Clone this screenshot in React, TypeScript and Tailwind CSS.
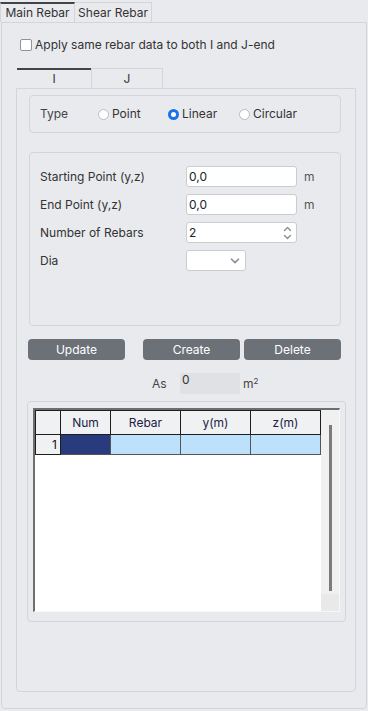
import React, { useState } from 'react';

type ShapeType = 'point' | 'linear' | 'circular';

const Radio: React.FC<{ checked: boolean; label: string; onClick: () => void }> = ({ checked, label, onClick }) => (
  <button type="button" onClick={onClick} className="flex items-center gap-[3px] text-[12px] text-[#333]">
    {checked ? (
      <span className="w-[11px] h-[11px] rounded-full bg-[#1a73e8] flex items-center justify-center">
        <span className="w-[5px] h-[5px] rounded-full bg-white" />
      </span>
    ) : (
      <span className="w-[11px] h-[11px] rounded-full bg-white border border-[#b9bcc2]" />
    )}
    <span>{label}</span>
  </button>
);

const TextField: React.FC<{ value: string; className?: string; children?: React.ReactNode }> = ({ value, className = '', children }) => (
  <div className={`h-[21px] bg-white border border-[#c9ccd1] rounded-[3px] flex items-center pl-[2px] pr-[4px] text-[12px] text-[#222] ${className}`}>
    <span className="flex-1">{value}</span>
    {children}
  </div>
);

const FormRow: React.FC<{ label: string; children: React.ReactNode }> = ({ label, children }) => (
  <div className="flex items-center h-[21px]">
    <span className="w-[146px] text-[12px] text-[#333]">{label}</span>
    {children}
  </div>
);

export default function App() {
  const [mainTab, setMainTab] = useState<'main' | 'shear'>('main');
  const [endTab, setEndTab] = useState<'I' | 'J'>('I');
  const [type, setType] = useState<ShapeType>('linear');
  const [sameData, setSameData] = useState(false);

  const columns = [
    { key: 'num', label: 'Num', w: 'w-[50px]' },
    { key: 'rebar', label: 'Rebar', w: 'w-[70px]' },
    { key: 'y', label: 'y(m)', w: 'w-[70px]' },
    { key: 'z', label: 'z(m)', w: 'w-[70px]' }
  ];

  return (
    <div
      className="w-[368px] h-[711px] bg-[#e9eaee] flex flex-col overflow-hidden"
      style={{ fontFamily: 'Inter, "Noto Sans", sans-serif' }}
    >
      {/* Top tabs */}
      <div className="flex pt-[2px] h-[22px]">
        <button
          type="button"
          onClick={() => setMainTab('main')}
          className={`w-[75px] h-[20px] text-[12px] text-[#333] border-l border-r border-[#d3d5da] ${mainTab === 'main' ? 'border-t-2 border-t-[#444]' : 'border-t border-t-[#d3d5da]'}`}
        >
          Main Rebar
        </button>
        <button
          type="button"
          onClick={() => setMainTab('shear')}
          className={`w-[77px] h-[20px] text-[12px] text-[#333] border-r border-[#d3d5da] ${mainTab === 'shear' ? 'border-t-2 border-t-[#444]' : 'border-t border-t-[#d3d5da]'}`}
        >
          Shear Rebar
        </button>
      </div>

      {/* Main panel */}
      <div className="ml-[1px] w-[366px] h-[687px] border border-[#d3d5da] rounded-b-[4px] flex flex-col">
        <label className="flex items-center mt-[13px] ml-[18px] gap-[3px] text-[12px] text-[#333] cursor-pointer">
          <input
            type="checkbox"
            checked={sameData}
            onChange={(e) => setSameData(e.target.checked)}
            className="sr-only"
          />
          <span className="w-[12px] h-[12px] bg-white border border-[#8f9298] rounded-[2px]" />
          Apply same rebar data to both I and J-end
        </label>

        {/* I / J tabs */}
        <div className="flex mt-[14px] ml-[15px] h-[20px]">
          <button
            type="button"
            onClick={() => setEndTab('I')}
            className={`w-[74px] h-[20px] text-[12px] text-[#333] ${endTab === 'I' ? 'border-t-2 border-t-[#444]' : 'border-t border-t-[#d3d5da]'}`}
          >
            I
          </button>
          <button
            type="button"
            onClick={() => setEndTab('J')}
            className={`w-[72px] h-[20px] text-[12px] text-[#333] border-l border-r border-[#d3d5da] ${endTab === 'J' ? 'border-t-2 border-t-[#444]' : 'border-t border-t-[#d3d5da]'}`}
          >
            J
          </button>
        </div>

        <div className="ml-[14px] w-[340px] h-[604px] border border-[#d3d5da] rounded-b-[4px] flex flex-col">
          {/* Type */}
          <div className="ml-[12px] mt-[6px] w-[312px] h-[38px] border border-[#d3d5da] rounded-[4px] flex items-center pl-[10px]">
            <span className="w-[58px] text-[12px] text-[#444]">Type</span>
            <div className="flex items-center gap-[13px]">
              <div className="w-[57px]">
                <Radio checked={type === 'point'} label="Point" onClick={() => setType('point')} />
              </div>
              <div className="w-[58px]">
                <Radio checked={type === 'linear'} label="Linear" onClick={() => setType('linear')} />
              </div>
              <Radio checked={type === 'circular'} label="Circular" onClick={() => setType('circular')} />
            </div>
          </div>

          {/* Rebar data */}
          <div className="ml-[12px] mt-[19px] w-[312px] h-[174px] border border-[#d3d5da] rounded-[4px] flex flex-col pl-[10px] pt-[13px] gap-[7px]">
            <FormRow label="Starting Point (y,z)">
              <TextField value="0,0" className="w-[111px]" />
              <span className="ml-[7px] text-[12px] text-[#555]">m</span>
            </FormRow>
            <FormRow label="End Point (y,z)">
              <TextField value="0,0" className="w-[111px]" />
              <span className="ml-[7px] text-[12px] text-[#555]">m</span>
            </FormRow>
            <FormRow label="Number of Rebars">
              <TextField value="2" className="w-[111px]">
                <svg width="9" height="16" viewBox="0 0 9 16" fill="none" stroke="#8a8d93" strokeWidth="1.4" strokeLinecap="round" strokeLinejoin="round">
                  <path d="M1.5 5.5 4.5 2.5 7.5 5.5" />
                  <path d="M1.5 10.5 4.5 13.5 7.5 10.5" />
                </svg>
              </TextField>
            </FormRow>
            <FormRow label="Dia">
              <TextField value="" className="w-[60px] pr-[5px]">
                <svg width="10" height="6" viewBox="0 0 10 6" fill="none" stroke="#8a8d93" strokeWidth="1.6" strokeLinecap="round" strokeLinejoin="round">
                  <path d="M1.5 1.2 5 4.6 8.5 1.2" />
                </svg>
              </TextField>
            </FormRow>
          </div>

          {/* Buttons */}
          <div className="flex ml-[11px] mt-[13px] h-[21px]">
            <button type="button" className="w-[97px] h-[21px] bg-[#6c7077] rounded-[4px] text-white text-[12px]">Update</button>
            <button type="button" className="ml-[18px] w-[97px] h-[21px] bg-[#6c7077] rounded-[4px] text-white text-[12px]">Create</button>
            <button type="button" className="ml-[4px] w-[97px] h-[21px] bg-[#6c7077] rounded-[4px] text-white text-[12px]">Delete</button>
          </div>

          {/* As */}
          <div className="flex items-center mt-[13px] h-[21px] ml-[135px]">
            <span className="w-[28px] text-[12px] text-[#444]">As</span>
            <div className="w-[60px] h-[21px] bg-[#dfe1e5] text-[12px] text-[#333] pl-[2px] leading-[14px]">0</div>
            <span className="ml-[3px] text-[12px] text-[#444]">
              m<sup className="text-[8px]">2</sup>
            </span>
          </div>

          {/* Table */}
          <div className="ml-[10px] mt-[7px] w-[319px] h-[221px] border border-[#d3d5da] rounded-[4px] pl-[5px] pt-[6px]">
            <div className="w-[307px] h-[204px] bg-white border-l-2 border-t-2 border-[#6e6e6e] border-r border-r-[#f7f7f7] border-b border-b-[#f7f7f7] flex">
              <div className="w-[286px] h-full">
                <table className="border-collapse text-[12px] table-fixed">
                  <thead>
                    <tr className="h-[24px]">
                      <th className="w-[25px] bg-[#f0f1f3] border border-[#1e1e1e]" />
                      {columns.map((c) => (
                        <th key={c.key} className={`${c.w} bg-[#f0f1f3] border border-[#1e1e1e] font-normal text-[#1c1c44]`}>
                          {c.label}
                        </th>
                      ))}
                    </tr>
                  </thead>
                  <tbody>
                    <tr className="h-[20px]">
                      <td className="bg-[#f0f1f3] border border-[#1e1e1e] text-right pr-[3px] text-[#111]">1</td>
                      <td className="bg-[#283c7d] border border-[#555]" />
                      <td className="bg-[#bde0fb] border border-[#555]" />
                      <td className="bg-[#bde0fb] border border-[#555]" />
                      <td className="bg-[#bde0fb] border border-[#555]" />
                    </tr>
                  </tbody>
                </table>
              </div>
              <div className="w-[18px] h-full bg-[#f0f0f0] flex flex-col">
                <div className="flex-1 flex justify-center pt-[15px] pb-[2px]">
                  <div className="w-[3px] h-[166px] bg-[#7b7b7b]" />
                </div>
                <div className="h-[17px] bg-[#e9e9e9]" />
              </div>
            </div>
          </div>
        </div>
      </div>
    </div>
  );
}
